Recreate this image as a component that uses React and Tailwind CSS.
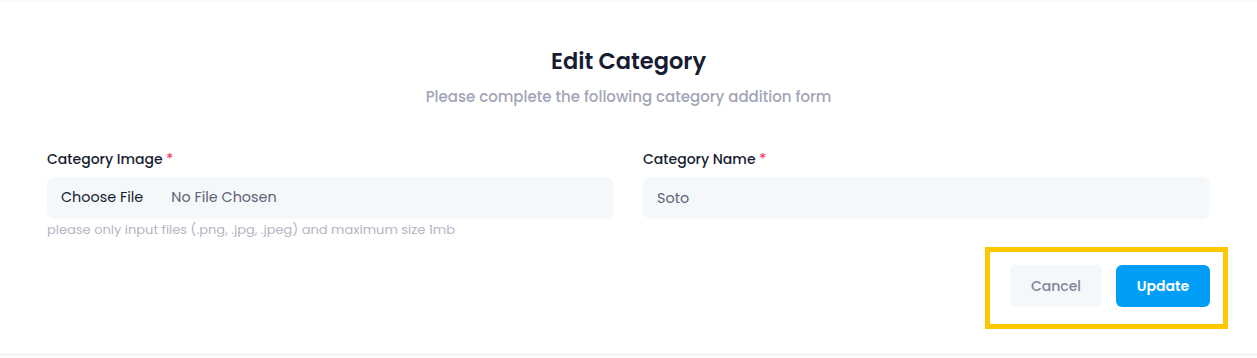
export default function App() {
  const font = { fontFamily: "Poppins, Inter, 'Noto Sans', sans-serif" };

  return (
    <div className="min-h-screen bg-[#fafafa] pt-[2px]" style={font}>
      <div className="relative bg-white h-[353px] border-b border-[#eeeeee] px-[47px]">
        {/* heading */}
        <div className="pt-[43px] text-center">
          <h2 className="text-[22.5px] leading-[33px] font-semibold text-[#181c32]">Edit Category</h2>
          <p className="mt-[8px] text-[15px] leading-[22px] font-medium text-[#a1a5b7]">
            Please complete the following category addition form
          </p>
        </div>

        {/* fields */}
        <div className="mt-[41px] grid grid-cols-2 gap-[29px]">
          <div>
            <label className="block text-[14px] leading-[21px] font-medium text-[#181c32] mb-[7px]">
              Category Image <span className="text-[#f1416c]">*</span>
            </label>
            <div className="h-[42px] rounded-[8px] bg-[#f5f8fa] flex items-center px-[14px] text-[14.4px]">
              <span className="text-[#181c32]">Choose File</span>
              <span className="ml-[28px] text-[#5e6278]">No File Chosen</span>
            </div>
            <p className="mt-[1px] text-[13px] leading-[20px] text-[#b5b5c3]">
              please only input files (.png, .jpg, .jpeg) and maximum size 1mb
            </p>
          </div>
          <div>
            <label className="block text-[14px] leading-[21px] font-medium text-[#181c32] mb-[7px]">
              Category Name <span className="text-[#f1416c]">*</span>
            </label>
            <input
              className="w-full h-[42px] rounded-[8px] bg-[#f5f8fa] px-[14px] text-[14.4px] text-[#5e6278] outline-none"
              defaultValue="Soto"
            />
          </div>
        </div>

        {/* actions */}
        <div className="mt-[25px] flex justify-end gap-[14px]">
          <button className="h-[42px] w-[92px] rounded-[6px] bg-[#f5f8fa] text-[14px] font-medium text-[#7e8299]">
            Cancel
          </button>
          <button className="h-[42px] w-[94px] rounded-[6px] bg-[#009ef7] text-[14px] font-semibold text-white">
            Update
          </button>
        </div>

        {/* highlight frame */}
        <div className="absolute left-[985px] top-[245px] w-[243px] h-[82px] border-[5px] border-[#ffc700] pointer-events-none" />
      </div>
    </div>
  );
}
